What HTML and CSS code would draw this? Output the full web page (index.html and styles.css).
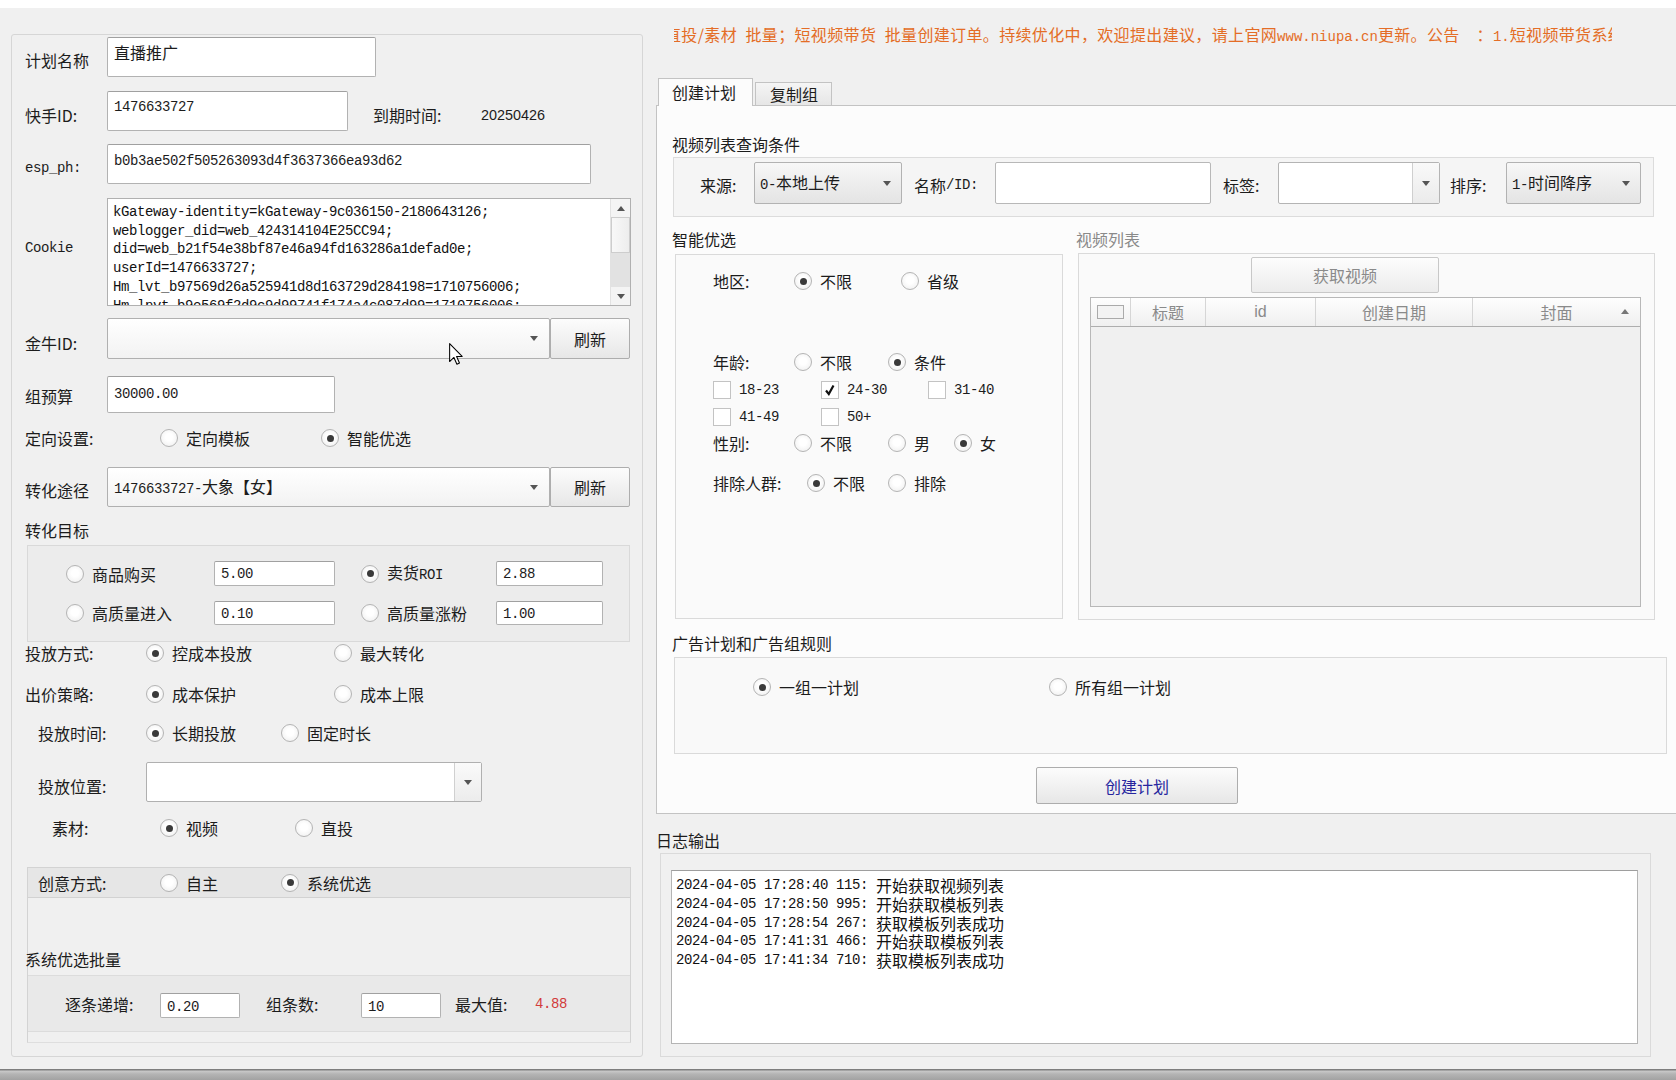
FILE: index.html
```html
<!DOCTYPE html>
<html lang="zh-CN">
<head>
<meta charset="utf-8">
<title>批量创建计划</title>
<link rel="stylesheet" href="styles.css">
</head>
<body>
<div class="topstrip"></div>
<div class="main">
  <section class="left">
    <div class="row row-name">
      <span class="lbl">计划名称</span>
      <div class="tb tb-name">直播推广</div>
    </div>
    <div class="row row-ks">
      <span class="lbl">快手ID:</span>
      <div class="tb tb-ks"><span class="m">1476633727</span></div>
      <span class="expire-lbl">到期时间:</span>
      <span class="expire-val">20250426</span>
    </div>
    <div class="row row-esp">
      <span class="lbl m">esp_ph:</span>
      <div class="tb tb-esp"><span class="m">b0b3ae502f505263093d4f3637366ea93d62</span></div>
    </div>
    <div class="row row-cookie">
      <span class="lbl m">Cookie</span>
      <div class="ta-cookie">
        <div class="ta-text m">kGateway-identity=kGateway-9c036150-2180643126;<br>weblogger_did=web_424314104E25CC94;<br>did=web_b21f54e38bf87e46a94fd163286a1defad0e;<br>userId=1476633727;<br>Hm_lvt_b97569d26a525941d8d163729d284198=1710756006;<br>Hm_lpvt_b9e569f2d9c9d99741f174a4c087d99=1710756006;</div>
        <div class="vscroll">
          <div class="sb-arrow"><span class="tri-up"></span></div>
          <div class="sb-thumb"></div>
          <div class="sb-track"></div>
          <div class="sb-arrow"><span class="tri-down"></span></div>
        </div>
      </div>
    </div>
    <div class="row row-jn">
      <span class="lbl">金牛ID:</span>
      <div class="combo combo-wide"><span class="tri-down combo-tri"></span></div>
      <div class="btn btn-refresh">刷新</div>
    </div>
    <div class="row row-budget">
      <span class="lbl">组预算</span>
      <div class="tb tb-budget"><span class="m">30000.00</span></div>
    </div>
    <div class="row row-target">
      <span class="lbl lbl-135">定向设置:</span>
      <span class="opt"><span class="rd"></span>定向模板</span>
      <span class="opt opt-gap71"><span class="rd on"></span>智能优选</span>
    </div>
    <div class="row row-conv">
      <span class="lbl">转化途径</span>
      <div class="combo combo-wide"><span class="combo-text"><span class="m">1476633727-</span>大象【女】</span><span class="tri-down combo-tri"></span></div>
      <div class="btn btn-refresh">刷新</div>
    </div>
    <div class="row row-goal-title">
      <span>转化目标</span>
    </div>
    <div class="goal-box">
      <span class="opt"><span class="rd"></span>商品购买</span>
      <div class="tb tb-small"><span class="m">5.00</span></div>
      <span></span>
      <span class="opt"><span class="rd on"></span><span>卖货<span class="m">ROI</span></span></span>
      <div class="tb tb-small"><span class="m">2.88</span></div>
      <span class="opt"><span class="rd"></span>高质量进入</span>
      <div class="tb tb-small"><span class="m">0.10</span></div>
      <span></span>
      <span class="opt"><span class="rd"></span>高质量涨粉</span>
      <div class="tb tb-small"><span class="m">1.00</span></div>
    </div>
    <div class="row row-k">
      <span class="lbl lbl-121">投放方式:</span>
      <span class="opt"><span class="rd on"></span>控成本投放</span>
      <span class="opt opt-gap82"><span class="rd"></span>最大转化</span>
    </div>
    <div class="row row-l">
      <span class="lbl lbl-121">出价策略:</span>
      <span class="opt"><span class="rd on"></span>成本保护</span>
      <span class="opt opt-gap98"><span class="rd"></span>成本上限</span>
    </div>
    <div class="row row-m">
      <span class="lbl lbl-107">投放时间:</span>
      <span class="opt"><span class="rd on"></span>长期投放</span>
      <span class="opt opt-gap45"><span class="rd"></span>固定时长</span>
    </div>
    <div class="row row-n">
      <span class="lbl lbl-107">投放位置:</span>
      <div class="combo combo-pos"><span class="combo-btn"><span class="tri-down"></span></span></div>
    </div>
    <div class="row row-o">
      <span class="lbl lbl-108">素材:</span>
      <span class="opt"><span class="rd on"></span>视频</span>
      <span class="opt opt-gap77"><span class="rd"></span>直投</span>
    </div>
    <div class="creative-box">
      <div class="creative-strip">
        <span class="lbl lbl-121s">创意方式:</span>
        <span class="opt"><span class="rd"></span>自主</span>
        <span class="opt opt-gap63"><span class="rd on"></span>系统优选</span>
      </div>
      <div class="batch-title">系统优选批量</div>
      <div class="batch-box">
        <span class="lbl-95">逐条递增:</span>
        <div class="tb tb-batch"><span class="m">0.20</span></div>
        <span class="lbl-95 gap-26">组条数:</span>
        <div class="tb tb-batch"><span class="m">10</span></div>
        <span class="lbl-80 gap-13">最大值:</span>
        <span class="max-val">4.88</span>
      </div>
    </div>
    <svg class="cursor" width="14" height="22" viewBox="0 0 12 19"><path d="M0.5 0.5 L0.5 16 L4.2 12.5 L6.8 18.3 L9 17.3 L6.5 11.6 L11.3 11.6 Z" fill="#fff" stroke="#000" stroke-width="0.9" stroke-linejoin="round"/></svg>
  </section>

  <section class="right">
    <div class="notice">直投/素材 批量；短视频带货 批量创建订单。持续优化中，欢迎提出建议，请上官网<span class="m">www.niupa.cn</span>更新。公告 &nbsp;：<span class="m">1.</span>短视频带货系统升级</div>
    <div class="tabs">
      <div class="tab active">创建计划</div>
      <div class="tab">复制组</div>
    </div>
    <div class="tabpanel">
      <div class="sec-title first">视频列表查询条件</div>
      <div class="query-box">
        <span class="q-lbl q-lbl-src">来源:</span>
        <div class="qcombo qcombo-src"><span><span class="m">0-</span>本地上传</span><span class="tri-down"></span></div>
        <span class="q-lbl q-lbl-name">名称<span class="m">/ID:</span></span>
        <div class="qinput"></div>
        <span class="q-lbl q-lbl-tag">标签:</span>
        <div class="qcombo-edit"><span class="qe-field"></span><span class="qe-btn"><span class="tri-down"></span></span></div>
        <span class="q-lbl q-lbl-sort">排序:</span>
        <div class="qcombo qcombo-sort"><span><span class="m">1-</span>时间降序</span><span class="tri-down"></span></div>
      </div>
      <div class="two-col">
        <div class="col-smart">
          <div class="sec-title">智能优选</div>
          <div class="smart-box">
            <div class="s-row s-area">
              <span class="s-lbl">地区:</span>
              <span class="opt"><span class="rd on"></span>不限</span>
              <span class="opt s-gap49"><span class="rd"></span>省级</span>
            </div>
            <div class="s-row s-age">
              <span class="s-lbl">年龄:</span>
              <span class="opt"><span class="rd"></span>不限</span>
              <span class="opt s-gap36"><span class="rd on"></span>条件</span>
            </div>
            <div class="ck-grid ck-grid1">
              <span class="opt"><span class="ck"></span><span class="m">18-23</span></span>
              <span class="opt"><span class="ck on"><svg width="16" height="16" viewBox="0 0 16 16"><path d="M4 8.5 L6.8 12 L11.5 3.5" fill="none" stroke="#111" stroke-width="2.2"/></svg></span><span class="m">24-30</span></span>
              <span class="opt"><span class="ck"></span><span class="m">31-40</span></span>
            </div>
            <div class="ck-grid ck-grid2">
              <span class="opt"><span class="ck"></span><span class="m">41-49</span></span>
              <span class="opt"><span class="ck"></span><span class="m">50+</span></span>
            </div>
            <div class="s-row s-sex">
              <span class="s-lbl">性别:</span>
              <span class="opt"><span class="rd"></span>不限</span>
              <span class="opt s-gap36"><span class="rd"></span>男</span>
              <span class="opt s-gap24"><span class="rd on"></span>女</span>
            </div>
            <div class="s-row s-excl">
              <span class="s-lbl s-lbl-94">排除人群:</span>
              <span class="opt"><span class="rd on"></span>不限</span>
              <span class="opt s-gap23"><span class="rd"></span>排除</span>
            </div>
          </div>
        </div>
        <div class="col-video">
          <div class="sec-title grey">视频列表</div>
          <div class="video-box">
            <div class="btn btn-fetch">获取视频</div>
            <div class="vtable">
              <div class="vhead">
                <span class="vh vh-ck"><span class="vh-box"></span></span>
                <span class="vh vh-title">标题</span>
                <span class="vh vh-id">id</span>
                <span class="vh vh-date">创建日期</span>
                <span class="vh vh-cover">封面<span class="tri-up vh-sort"></span></span>
              </div>
            </div>
          </div>
        </div>
      </div>
      <div class="sec-title rule-title">广告计划和广告组规则</div>
      <div class="rule-box">
        <span class="opt"><span class="rd on"></span>一组一计划</span>
        <span class="opt rule-gap"><span class="rd"></span>所有组一计划</span>
      </div>
      <div class="btn btn-create">创建计划</div>
    </div>
    <div class="log-title">日志输出</div>
    <div class="log-box">
      <div class="log-area">
        <div class="log-line"><span class="m">2024-04-05 17:28:40 115: </span><span>开始获取视频列表</span></div>
        <div class="log-line"><span class="m">2024-04-05 17:28:50 995: </span><span>开始获取模板列表</span></div>
        <div class="log-line"><span class="m">2024-04-05 17:28:54 267: </span><span>获取模板列表成功</span></div>
        <div class="log-line"><span class="m">2024-04-05 17:41:31 466: </span><span>开始获取模板列表</span></div>
        <div class="log-line"><span class="m">2024-04-05 17:41:34 710: </span><span>获取模板列表成功</span></div>
      </div>
    </div>
  </section>
</div>
<div class="bottombar"></div>
</body>
</html>
```

FILE: styles.css
```css
html, body {
  margin: 0;
  padding: 0;
}
body {
  width: 1676px;
  height: 1080px;
  overflow: hidden;
  background: #f0f0f0;
  font-family: "Noto Sans CJK SC", "Noto Sans", sans-serif;
  font-size: 16px;
  line-height: 20px;
  color: #1c1c1c;
}
.m {
  font-family: "Liberation Mono", "DejaVu Sans Mono", monospace;
  font-size: 14px;
  letter-spacing: -0.4px;
}
.topstrip {
  height: 8px;
  background: #ffffff;
}
.main {
  display: flex;
  height: 1061px;
}
.bottombar {
  height: 11px;
  background: linear-gradient(#7e7e7e 0, #7e7e7e 1px, #c9c9c9 2px, #b4b4b4 5px, #a2a2a2 100%);
}

/* ---------- left panel ---------- */
.left {
  position: relative;
  flex: none;
  box-sizing: border-box;
  width: 632px;
  height: 1023px;
  margin: 26px 0 0 11px;
  padding: 2px 0 0 13px;
  border: 1px solid #d6d6d6;
  border-radius: 3px;
}
.row {
  display: flex;
  align-items: flex-start;
}
.lbl {
  flex: none;
  width: 82px;
  white-space: nowrap;
}
.tb {
  box-sizing: border-box;
  flex: none;
  background: #fff;
  border: 1px solid #b2b2b2;
  border-top-color: #a0a0a0;
  border-radius: 2px;
  padding: 4px 6px;
  white-space: nowrap;
  overflow: hidden;
}
.row-name { height: 40px; }
.row-name .lbl { margin-top: 13px; }
.tb-name { width: 269px; height: 40px; }
.row-ks { height: 40px; margin-top: 14px; }
.row-ks .lbl { margin-top: 14px; }
.tb-ks { width: 241px; height: 40px; padding-top: 2px; }
.expire-lbl { margin: 14px 0 0 25px; width: 108px; }
.expire-val {
  margin-top: 14px;
  font-family: "Liberation Sans", sans-serif;
  font-size: 14.4px;
}
.row-esp { height: 40px; margin-top: 13px; }
.row-esp .lbl { margin-top: 14px; }
.tb-esp { width: 484px; height: 40px; padding-top: 3px; }
.row-cookie { height: 108px; margin-top: 14px; }
.row-cookie .lbl { margin-top: 40px; }
.ta-cookie {
  box-sizing: border-box;
  width: 524px;
  height: 108px;
  display: flex;
  background: #fff;
  border: 1px solid #b0b0b0;
  overflow: hidden;
}
.ta-text {
  flex: 1;
  padding: 4px 0 0 5px;
  line-height: 18.7px;
  white-space: nowrap;
  overflow: hidden;
  color: #111;
}
.vscroll {
  width: 19px;
  display: flex;
  flex-direction: column;
  background: #e9e9e9;
  border-left: 1px solid #e2e2e2;
}
.sb-arrow {
  height: 18px;
  display: flex;
  align-items: center;
  justify-content: center;
  background: #f4f4f4;
}
.sb-thumb {
  height: 36px;
  box-sizing: border-box;
  background: linear-gradient(90deg, #f8f8f8, #ededed);
  border: 1px solid #cdcdcd;
}
.sb-track { flex: 1; background: #e2e2e2; }
.tri-down, .tri-up {
  display: inline-block;
  width: 0;
  height: 0;
  border-left: 4px solid transparent;
  border-right: 4px solid transparent;
}
.tri-down { border-top: 5px solid #555; }
.tri-up { border-bottom: 5px solid #555; }

.combo {
  box-sizing: border-box;
  position: relative;
  display: flex;
  align-items: center;
  background: linear-gradient(#ffffff, #f2f2f2);
  border: 1px solid #b0b0b0;
  border-radius: 2px;
}
.combo-wide { width: 443px; }
.combo-text { padding-left: 6px; flex: 1; white-space: nowrap; }
.combo-tri { margin-left: auto; margin-right: 11px; }
.btn {
  box-sizing: border-box;
  display: flex;
  align-items: center;
  justify-content: center;
  background: linear-gradient(#fcfcfc, #e7e7e7);
  border: 1px solid #adadad;
  border-radius: 2px;
}
.btn-refresh { width: 80px; }
.row-jn { height: 41px; margin-top: 12px; }
.row-jn .lbl { margin-top: 15px; }
.row-jn .combo, .row-jn .btn { height: 41px; }
.row-budget { height: 37px; margin-top: 17px; }
.row-budget .lbl { margin-top: 10px; }
.tb-budget { width: 228px; height: 37px; display: flex; align-items: center; padding-top: 2px; }

.opt {
  display: inline-flex;
  align-items: center;
  gap: 8px;
  white-space: nowrap;
}
.rd {
  box-sizing: border-box;
  position: relative;
  flex: none;
  width: 18px;
  height: 18px;
  border-radius: 50%;
  border: 1px solid #b4b4b4;
  background: radial-gradient(circle at 50% 45%, #ffffff 30%, #ececec 100%);
}
.rd.on::after {
  content: "";
  position: absolute;
  left: 4.5px;
  top: 4.5px;
  width: 7px;
  height: 7px;
  border-radius: 50%;
  background: #3a3a3a;
}
.ck {
  box-sizing: border-box;
  flex: none;
  width: 18px;
  height: 18px;
  border: 1px solid #c3c3c3;
  background: #fff;
  display: flex;
  align-items: center;
  justify-content: center;
}
.row-target { height: 24px; margin-top: 13px; align-items: center; }
.lbl-135 { width: 135px; }
.opt-gap71 { margin-left: 71px; }
.row-conv { height: 40px; margin-top: 17px; }
.row-conv .lbl { margin-top: 13px; }
.row-conv .combo, .row-conv .btn { height: 40px; }
.row-goal-title { height: 20px; margin-top: 13px; }
.goal-box {
  box-sizing: border-box;
  width: 603px;
  height: 97px;
  margin: 5px 0 0 2px;
  padding: 15px 0 0 38px;
  border: 1px solid #d9d9d9;
  background: #ececec;
  display: grid;
  grid-template-columns: 148px 121px 26px 135px 107px;
  grid-template-rows: 25px 24px;
  row-gap: 15px;
  align-items: center;
}
.tb-small {
  height: 100%;
  display: flex;
  align-items: center;
  padding: 1px 6px 0;
}
.row-k { height: 20px; margin-top: 1px; align-items: center; }
.lbl-121 { width: 121px; }
.opt-gap82 { margin-left: 82px; }
.row-l { height: 20px; margin-top: 21px; align-items: center; }
.opt-gap98 { margin-left: 98px; }
.row-m { height: 20px; margin-top: 19px; padding-left: 13px; align-items: center; }
.lbl-107 { width: 108px; }
.opt-gap45 { margin-left: 45px; }
.row-n { height: 40px; margin-top: 19px; padding-left: 13px; }
.row-n .lbl { margin-top: 14px; }
.combo-pos { width: 336px; height: 40px; justify-content: flex-end; background: #fff; }
.combo-btn {
  width: 27px;
  height: 100%;
  box-sizing: border-box;
  border-left: 1px solid #d0d0d0;
  background: linear-gradient(#fafafa, #ececec);
  display: flex;
  align-items: center;
  justify-content: center;
}
.row-o { height: 20px; margin-top: 16px; padding-left: 27px; align-items: center; }
.lbl-108 { width: 108px; }
.opt-gap77 { margin-left: 77px; }

.creative-box {
  box-sizing: border-box;
  width: 604px;
  height: 176px;
  margin: 29px 0 0 2px;
  border: 1px solid #d3d3d3;
  border-bottom-color: #dedede;
}
.creative-strip {
  height: 29px;
  display: flex;
  align-items: center;
  padding-left: 10px;
  background: #e6e6e6;
  border-bottom: 1px solid #d2d2d2;
}
.lbl-121s { width: 122px; }
.opt-gap63 { margin-left: 63px; }
.batch-title {
  height: 20px;
  margin: 51px 0 0 -3px;
}
.batch-box {
  box-sizing: border-box;
  height: 57px;
  margin-top: 6px;
  display: flex;
  align-items: center;
  padding: 0 0 0 37px;
  background: #e9e9e9;
  border-top: 1px solid #dcdcdc;
  border-bottom: 1px solid #dcdcdc;
}
.lbl-95 { width: 95px; flex: none; }
.lbl-80 { width: 80px; flex: none; }
.gap-26 { margin-left: 26px; }
.gap-13 { margin-left: 14px; }
.tb-batch {
  width: 80px;
  height: 25px;
  margin-top: 4px;
  display: flex;
  align-items: center;
  padding: 2px 6px 0;
}
.max-val {
  font-family: "Liberation Mono", monospace;
  font-size: 14px;
  letter-spacing: -0.4px;
  color: #d23b3b;
}
.cursor {
  position: absolute;
  left: 437px;
  top: 308px;
}

/* ---------- right side ---------- */
.right {
  flex: none;
  width: 1024px;
  margin-left: 13px;
}
.notice {
  width: 938px;
  height: 20px;
  margin: 16px 0 0 18px;
  overflow: hidden;
  white-space: nowrap;
  text-indent: -9px;
  word-spacing: 4.5px;
  letter-spacing: 0.35px;
  color: #e46d26;
}
.notice .m { letter-spacing: 0; word-spacing: 0; }
.tabs {
  position: relative;
  z-index: 1;
  display: flex;
  align-items: flex-end;
  height: 27px;
  margin-top: 34px;
  padding-left: 2px;
}
.tab {
  box-sizing: border-box;
  width: 77px;
  height: 23px;
  margin-left: 2px;
  padding-left: 14px;
  line-height: 22px;
  background: linear-gradient(#f5f5f5, #e6e6e6);
  border: 1px solid #c3c3c3;
  border-bottom: none;
}
.tab.active {
  width: 95px;
  height: 28px;
  margin-left: 0;
  margin-bottom: -1px;
  padding-left: 13px;
  line-height: 26px;
  background: #fcfcfc;
}
.tabpanel {
  box-sizing: border-box;
  height: 709px;
  padding-left: 15px;
  background: #fcfcfc;
  border: 1px solid #c3c3c3;
  border-right: none;
}
.sec-title { height: 20px; white-space: nowrap; }
.sec-title.first { margin-top: 28px; }
.sec-title.grey { color: #8a8a8a; }
.query-box {
  box-sizing: border-box;
  width: 981px;
  height: 60px;
  margin: 3px 0 0 1px;
  padding: 4px 0 0 26px;
  display: flex;
  align-items: flex-start;
  background: #f5f5f5;
  border: 1px solid #dcdcdc;
}
.q-lbl {
  flex: none;
  height: 46px;
  display: flex;
  align-items: center;
  white-space: nowrap;
}
.q-lbl-src { width: 54px; }
.q-lbl-name { width: 81px; margin-left: 12px; }
.q-lbl-tag { width: 55px; margin-left: 12px; }
.q-lbl-sort { width: 56px; margin-left: 10px; }
.qcombo {
  box-sizing: border-box;
  flex: none;
  height: 42px;
  display: flex;
  align-items: center;
  justify-content: space-between;
  padding: 0 10px 0 5px;
  background: linear-gradient(#f7f7f7, #e4e4e4);
  border: 1px solid #b2b2b2;
  border-radius: 2px;
  white-space: nowrap;
}
.qcombo-src { width: 148px; }
.qcombo-sort { width: 135px; }
.qinput {
  box-sizing: border-box;
  flex: none;
  width: 216px;
  height: 42px;
  background: #fff;
  border: 1px solid #b8b8b8;
  border-radius: 2px;
}
.qcombo-edit {
  box-sizing: border-box;
  flex: none;
  width: 162px;
  height: 42px;
  display: flex;
  background: #fff;
  border: 1px solid #b4b4b4;
  border-radius: 2px;
}
.qe-field { flex: 1; }
.qe-btn {
  width: 26px;
  display: flex;
  align-items: center;
  justify-content: center;
  border-left: 1px solid #cfcfcf;
  background: linear-gradient(#f9f9f9, #ebebeb);
}
.two-col {
  display: flex;
  margin-top: 12px;
}
.col-smart { width: 404px; flex: none; }
.smart-box {
  box-sizing: border-box;
  width: 388px;
  height: 365px;
  margin: 5px 0 0 3px;
  padding-left: 37px;
  background: #fafafa;
  border: 1px solid #dadada;
}
.s-row {
  display: flex;
  align-items: center;
  height: 20px;
}
.s-lbl { width: 81px; flex: none; }
.s-lbl-94 { width: 94px; }
.s-area { margin-top: 16px; }
.s-age { margin-top: 61px; }
.s-sex { margin-top: 8px; }
.s-excl { margin-top: 20px; }
.s-gap49 { margin-left: 49px; }
.s-gap36 { margin-left: 36px; }
.s-gap24 { margin-left: 24px; }
.s-gap23 { margin-left: 23px; }
.ck-grid {
  display: grid;
  grid-template-columns: 108px 107px auto;
  height: 18px;
  align-items: center;
}
.ck-grid1 { margin-top: 8px; }
.ck-grid2 { margin-top: 9px; }
.col-video { flex: none; }
.video-box {
  box-sizing: border-box;
  width: 577px;
  height: 367px;
  margin: 4px 0 0 2px;
  padding-top: 3px;
  background: #fafafa;
  border: 1px solid #dadada;
}
.btn-fetch {
  width: 188px;
  height: 36px;
  margin-left: 172px;
  color: #8a8a8a;
  border-color: #c8c8c8;
  background: linear-gradient(#fdfdfd, #ececec);
}
.vtable {
  box-sizing: border-box;
  width: 551px;
  height: 310px;
  margin: 4px 0 0 11px;
  background: #f0f0f0;
  border: 1px solid #b8b8b8;
}
.vhead {
  display: flex;
  height: 28px;
  background: linear-gradient(#fefefe, #f0f0f0);
  border-bottom: 1px solid #aeaeae;
  color: #8a8a8a;
}
.vh {
  box-sizing: border-box;
  display: flex;
  align-items: center;
  justify-content: center;
  border-right: 1px solid #d6d6d6;
  flex: none;
}
.vh-ck { width: 40px; justify-content: flex-start; padding-left: 6px; }
.vh-box {
  box-sizing: border-box;
  width: 27px;
  height: 14px;
  border: 1px solid #aaaaaa;
  background: #f3f3f3;
}
.vh-title { width: 75px; }
.vh-id { width: 110px; font-family: "Liberation Sans", sans-serif; }
.vh-date { width: 157px; }
.vh-cover {
  position: relative;
  flex: 1;
  border-right: none;
}
.vh-sort {
  position: absolute;
  right: 11px;
  top: 11px;
  border-bottom-color: #777;
}
.rule-title { margin-top: 13px; }
.rule-box {
  box-sizing: border-box;
  width: 993px;
  height: 97px;
  margin: 4px 0 0 2px;
  padding: 19px 0 0 78px;
  display: flex;
  align-items: flex-start;
  background: #f9f9f9;
  border: 1px solid #dadada;
}
.rule-gap { margin-left: 190px; }
.btn-create {
  width: 202px;
  height: 37px;
  margin: 13px 0 0 364px;
  color: #26269e;
}
.log-title {
  height: 20px;
  margin-top: 16px;
}
.log-box {
  box-sizing: border-box;
  width: 991px;
  height: 204px;
  margin: 3px 0 0 4px;
  padding: 16px 0 0 10px;
  background: #f0f0f0;
  border: 1px solid #dadada;
}
.log-area {
  box-sizing: border-box;
  width: 967px;
  height: 174px;
  padding: 5px 0 0 4px;
  background: #fff;
  border: 1px solid #b4b4b4;
  border-top-color: #9e9e9e;
  white-space: nowrap;
  color: #111;
}
.log-line {
  height: 18.8px;
  line-height: 18.8px;
  display: flex;
  align-items: center;
}
.log-line .m { white-space: pre; }
```
